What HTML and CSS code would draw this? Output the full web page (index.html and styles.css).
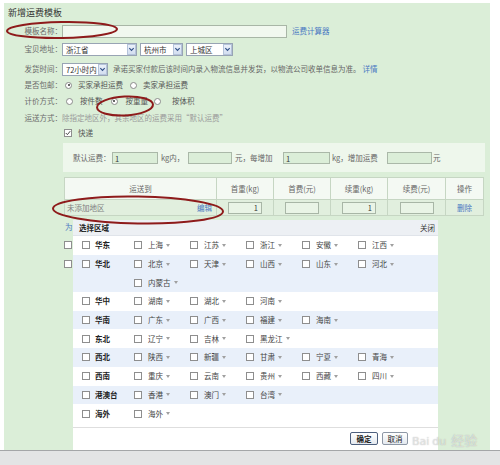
FILE: index.html
```html
<!DOCTYPE html>
<html lang="zh-CN">
<head>
<meta charset="utf-8">
<title>新增运费模板</title>
<link rel="stylesheet" href="styles.css">
</head>
<body>
<div class="screen">
  <div class="page">
    <div class="title">新增运费模板</div>

    <div class="row r1">
      <span class="lbl">模板名称：</span>
      <span class="inp w-name"></span>
      <a class="link ml5">运费计算器</a>
    </div>

    <div class="row r2">
      <span class="lbl">宝贝地址：</span>
      <span class="sel w75"><span class="sel-text">浙江省</span><span class="sel-arrow"><svg viewBox="0 0 8 8" width="7" height="7"><path d="M1.5 2.5 L4 5 L6.5 2.5" fill="none" stroke="#2f4f86" stroke-width="1.3"/></svg></span></span>
      <span class="sel w43 ml3"><span class="sel-text">杭州市</span><span class="sel-arrow"><svg viewBox="0 0 8 8" width="7" height="7"><path d="M1.5 2.5 L4 5 L6.5 2.5" fill="none" stroke="#2f4f86" stroke-width="1.3"/></svg></span></span>
      <span class="sel w47 ml3"><span class="sel-text">上城区</span><span class="sel-arrow"><svg viewBox="0 0 8 8" width="7" height="7"><path d="M1.5 2.5 L4 5 L6.5 2.5" fill="none" stroke="#2f4f86" stroke-width="1.3"/></svg></span></span>
    </div>

    <div class="row r3">
      <span class="lbl">发货时间：</span>
      <span class="sel w46"><span class="sel-text">72小时内</span><span class="sel-arrow"><svg viewBox="0 0 8 8" width="7" height="7"><path d="M1.5 2.5 L4 5 L6.5 2.5" fill="none" stroke="#2f4f86" stroke-width="1.3"/></svg></span></span>
      <span class="txt ml5">承诺买家付款后该时间内录入物流信息并发货，以物流公司收单信息为准。</span>
      <a class="link ml2">详情</a>
    </div>

    <div class="row r4">
      <span class="lbl">是否包邮：</span>
      <i class="radio on ml3"></i><span class="opt ml6">买家承担运费</span>
      <i class="radio ml7"></i><span class="opt ml6">卖家承担运费</span>
    </div>

    <div class="row r5">
      <span class="lbl">计价方式：</span>
      <i class="radio ml4"></i><span class="opt ml7">按件数</span>
      <i class="radio on ml8"></i><span class="opt ml8">按重量</span>
      <i class="radio ml6"></i><span class="opt ml11">按体积</span>
    </div>

    <div class="row r6">
      <span class="lbl">运送方式：</span>
      <span class="hint">除指定地区外，其余地区的运费采用“默认运费”</span>
    </div>

    <div class="row r7">
      <span class="lbl"></span>
      <i class="cb checked ml2"><svg viewBox="0 0 8 8" width="6" height="6"><path d="M1 4 L3.2 6.2 L7 1.5" fill="none" stroke="#333" stroke-width="1.2"/></svg></i>
      <span class="opt ml6">快递</span>
    </div>

    <div class="defbox">
      <span class="t-lbl">默认运费：</span>
      <span class="inp dinp w46 ml2">1</span>
      <span class="t-s w24 ml3">kg内，</span>
      <span class="inp dinp w44 ml3"></span>
      <span class="t-s w45 ml3">元，每增加</span>
      <span class="inp dinp w47 ml3">1</span>
      <span class="t-s w53 ml2">kg，增加运费</span>
      <span class="inp dinp w45 ml2"></span>
      <span class="t-s ml1">元</span>
    </div>

    <table class="fare">
      <colgroup>
        <col class="c-to"><col class="c-n"><col class="c-n"><col class="c-n"><col class="c-n2"><col class="c-op">
      </colgroup>
      <thead>
        <tr><th>运送到</th><th>首重(kg)</th><th>首费(元)</th><th>续重(kg)</th><th>续费(元)</th><th>操作</th></tr>
      </thead>
      <tbody>
        <tr>
          <td><div class="to-cell"><span class="none">未添加地区</span><a class="link">编辑</a></div></td>
          <td><span class="tinp">1</span></td>
          <td><span class="tinp"></span></td>
          <td><span class="tinp">1</span></td>
          <td><span class="tinp"></span></td>
          <td><a class="link">删除</a></td>
        </tr>
      </tbody>
    </table>

    <div class="row r8"><a class="link">为</a></div>
    <div class="row r9"><i class="cb"></i></div>
    <div class="row r9"><i class="cb"></i></div>

    <div class="popup">
      <div class="pop-head"><b>选择区域</b><span class="close">关闭</span></div>
      <div class="pop-body">
        <div class="area">
          <span class="reg"><i class="cb"></i><b>华东</b></span>
          <div class="provs">
            <span class="prov"><i class="cb"></i>上海<i class="dd"></i></span>
            <span class="prov"><i class="cb"></i>江苏<i class="dd"></i></span>
            <span class="prov"><i class="cb"></i>浙江<i class="dd"></i></span>
            <span class="prov"><i class="cb"></i>安徽<i class="dd"></i></span>
            <span class="prov"><i class="cb"></i>江西<i class="dd"></i></span>
          </div>
        </div>
        <div class="area alt">
          <span class="reg"><i class="cb"></i><b>华北</b></span>
          <div class="provs">
            <span class="prov"><i class="cb"></i>北京<i class="dd"></i></span>
            <span class="prov"><i class="cb"></i>天津<i class="dd"></i></span>
            <span class="prov"><i class="cb"></i>山西<i class="dd"></i></span>
            <span class="prov"><i class="cb"></i>山东<i class="dd"></i></span>
            <span class="prov"><i class="cb"></i>河北<i class="dd"></i></span>
            <span class="prov"><i class="cb"></i>内蒙古<i class="dd"></i></span>
          </div>
        </div>
        <div class="area">
          <span class="reg"><i class="cb"></i><b>华中</b></span>
          <div class="provs">
            <span class="prov"><i class="cb"></i>湖南<i class="dd"></i></span>
            <span class="prov"><i class="cb"></i>湖北<i class="dd"></i></span>
            <span class="prov"><i class="cb"></i>河南<i class="dd"></i></span>
          </div>
        </div>
        <div class="area alt">
          <span class="reg"><i class="cb"></i><b>华南</b></span>
          <div class="provs">
            <span class="prov"><i class="cb"></i>广东<i class="dd"></i></span>
            <span class="prov"><i class="cb"></i>广西<i class="dd"></i></span>
            <span class="prov"><i class="cb"></i>福建<i class="dd"></i></span>
            <span class="prov"><i class="cb"></i>海南<i class="dd"></i></span>
          </div>
        </div>
        <div class="area">
          <span class="reg"><i class="cb"></i><b>东北</b></span>
          <div class="provs">
            <span class="prov"><i class="cb"></i>辽宁<i class="dd"></i></span>
            <span class="prov"><i class="cb"></i>吉林<i class="dd"></i></span>
            <span class="prov"><i class="cb"></i>黑龙江<i class="dd"></i></span>
          </div>
        </div>
        <div class="area alt">
          <span class="reg"><i class="cb"></i><b>西北</b></span>
          <div class="provs">
            <span class="prov"><i class="cb"></i>陕西<i class="dd"></i></span>
            <span class="prov"><i class="cb"></i>新疆<i class="dd"></i></span>
            <span class="prov"><i class="cb"></i>甘肃<i class="dd"></i></span>
            <span class="prov"><i class="cb"></i>宁夏<i class="dd"></i></span>
            <span class="prov"><i class="cb"></i>青海<i class="dd"></i></span>
          </div>
        </div>
        <div class="area">
          <span class="reg"><i class="cb"></i><b>西南</b></span>
          <div class="provs">
            <span class="prov"><i class="cb"></i>重庆<i class="dd"></i></span>
            <span class="prov"><i class="cb"></i>云南<i class="dd"></i></span>
            <span class="prov"><i class="cb"></i>贵州<i class="dd"></i></span>
            <span class="prov"><i class="cb"></i>西藏<i class="dd"></i></span>
            <span class="prov"><i class="cb"></i>四川<i class="dd"></i></span>
          </div>
        </div>
        <div class="area alt">
          <span class="reg"><i class="cb"></i><b>港澳台</b></span>
          <div class="provs">
            <span class="prov"><i class="cb"></i>香港<i class="dd"></i></span>
            <span class="prov"><i class="cb"></i>澳门<i class="dd"></i></span>
            <span class="prov"><i class="cb"></i>台湾<i class="dd"></i></span>
          </div>
        </div>
        <div class="area">
          <span class="reg"><i class="cb"></i><b>海外</b></span>
          <div class="provs">
            <span class="prov"><i class="cb"></i>海外<i class="dd"></i></span>
          </div>
        </div>
      </div>
      <div class="pop-foot">
        <span class="btn ok">确定</span>
        <span class="btn cancel">取消</span>
      </div>
    </div>
  </div>
  <div class="statusbar"></div>

  <div class="watermark"><span class="wm-en">Bai</span><span class="wm-en">du</span><span class="wm-cn">经验</span></div>

  <svg class="marks" viewBox="0 0 500 465" width="500" height="465">
    <ellipse cx="62" cy="30" rx="55" ry="8" transform="rotate(-1 62 30)"/>
    <ellipse cx="125" cy="106" rx="28" ry="9.5" transform="rotate(-3 125 106)"/>
    <ellipse cx="138" cy="210" rx="85" ry="13.5" transform="rotate(1 138 210)"/>
  </svg>
</div>
</body>
</html>
```

FILE: styles.css
```css
* { box-sizing: border-box; }
html, body { margin: 0; padding: 0; background: #fff; }
.screen {
  position: relative;
  width: 500px;
  height: 465px;
  overflow: hidden;
  background: #fff;
  font-family: "Noto Sans CJK SC", "Liberation Sans", sans-serif;
  font-size: 7.5px;
  color: #555;
}
.page {
  position: relative;
  margin: 3px 10px 0 4px;
  height: 447px;
  background: #dbeed8;
}
.statusbar {
  height: 15px;
  background: #e3e4e5;
  border-top: 1px solid #a4a6a8;
}
.title {
  height: 15px;
  padding: 5px 0 0 4px;
  font-size: 9px;
  line-height: 10px;
  color: #333;
}
.row { display: flex; align-items: center; height: 16px; line-height: 10px; white-space: nowrap; }
.r1 { margin-top: 5px; }
.r2 { margin-top: 2px; }
.r3 { margin-top: 4px; }
.r6 { margin-top: 1px; height: 15px; }
.r8 { margin-top: 3px; padding-left: 61px; }
.r9 { height: 19px; padding-left: 60px; }
.lbl { width: 58px; flex: none; text-align: right; color: #6b6b6b; }
.link { color: #4a78c2; text-decoration: none; }
.txt { color: #666; }
.hint { color: #9a9a9a; }
.opt { color: #555; }

.ml1 { margin-left: 1px; } .ml2 { margin-left: 2px; } .ml3 { margin-left: 3px; }
.ml4 { margin-left: 4px; } .ml5 { margin-left: 5px; } .ml6 { margin-left: 6px; }
.ml7 { margin-left: 7px; } .ml8 { margin-left: 8px; } .ml11 { margin-left: 11px; }

.inp {
  display: inline-block;
  height: 13px;
  border: 1px solid #a8b6a6;
  background: #f1f8ef;
  color: #333;
  line-height: 11px;
  padding-left: 2px;
}
.w-name { width: 225px; }
.w24 { width: 24px; } .w43 { width: 43px; } .w44 { width: 44px; } .w45 { width: 45px; }
.w46 { width: 46px; } .w47 { width: 47px; } .w53 { width: 53px; } .w75 { width: 75px; }

.sel {
  display: inline-flex;
  align-items: center;
  height: 13px;
  border: 1px solid #98a4b4;
  background: #fff;
  color: #333;
}
.sel-text { flex: 1; padding-left: 3px; line-height: 11px; }
.sel-arrow {
  width: 9px;
  height: 11px;
  background: linear-gradient(#eaf0fa, #d3def0);
  border: 1px solid #b4c3da;
  display: flex;
  align-items: center;
  justify-content: center;
}

.radio {
  display: inline-block;
  flex: none;
  width: 7px;
  height: 7px;
  border: 1px solid #8a8a8a;
  border-radius: 50%;
  background: #fff;
  position: relative;
}
.radio.on::after {
  content: "";
  position: absolute;
  left: 1.5px;
  top: 1.5px;
  width: 2px;
  height: 2px;
  border-radius: 50%;
  background: #333;
}
.cb {
  display: inline-flex;
  align-items: center;
  justify-content: center;
  flex: none;
  width: 8px;
  height: 8px;
  border: 1px solid #8e8e8e;
  background: #fff;
}

.defbox {
  display: flex;
  align-items: center;
  margin: 2px 0 0 59px;
  width: 422px;
  height: 29px;
  padding-left: 10px;
  background: #eef7ec;
  white-space: nowrap;
  line-height: 10px;
}
.t-lbl { width: 37px; color: #666; }
.t-s { display: inline-block; color: #666; }
.dinp { height: 12px; background: #dbeed8; border-color: #aab8a8; }

.fare {
  margin: 5px 0 0 60px;
  width: 419px;
  table-layout: fixed;
  border-collapse: collapse;
  line-height: 10px;
}
.c-to { width: 152px; } .c-n { width: 57px; } .c-n2 { width: 58px; } .c-op { width: 38px; }
.fare th, .fare td { border: 1px solid #c6d6c3; padding: 0; text-align: center; }
.fare th { height: 22px; background: #f4f9f3; font-weight: normal; color: #666; }
.fare td { height: 16px; background: #e1efde; }
.to-cell { display: flex; justify-content: space-between; padding: 0 4px 0 2px; }
.none { color: #808080; }
.tinp {
  display: inline-block;
  vertical-align: middle;
  width: 34px;
  height: 12px;
  border: 1px solid #a8b6a6;
  background: #e9f4e6;
  text-align: right;
  padding-right: 3px;
  line-height: 10px;
  color: #333;
}

.popup {
  position: absolute;
  left: 69px;
  top: 217px;
  width: 365px;
  height: 230px;
  background: #fff;
  z-index: 2;
  line-height: 10px;
  white-space: nowrap;
}
.pop-head {
  display: flex;
  justify-content: space-between;
  align-items: center;
  height: 16px;
  padding: 0 3px 0 6px;
  background: #edf0f4;
  border-bottom: 1px solid #e0e4ea;
}
.pop-head b { color: #222; }
.close { color: #333; }
.pop-body { height: 191px; }
.area { display: flex; align-items: flex-start; padding-left: 9px; }
.area.alt { background: #e9f0fa; }
.reg { display: flex; align-items: center; width: 52px; height: 18.7px; flex: none; }
.reg .cb { margin-right: 5px; }
.reg b { color: #222; }
.provs { display: flex; flex-wrap: wrap; width: 280px; }
.prov { display: flex; align-items: center; width: 56px; height: 18.7px; color: #444; }
.prov .cb { margin-right: 6px; }
.dd {
  display: inline-block;
  margin-left: 3px;
  width: 0;
  height: 0;
  border-left: 2px solid transparent;
  border-right: 2px solid transparent;
  border-top: 3px solid #a0a0a0;
}
.pop-foot {
  display: flex;
  justify-content: flex-end;
  border-top: 1px solid #dedede;
  padding: 4px 30px 0 0;
}
.btn {
  display: inline-block;
  width: 28px;
  height: 13px;
  border: 1px solid #8d97a5;
  border-radius: 2px;
  background: linear-gradient(#ffffff, #e4e9ef);
  text-align: center;
  line-height: 11px;
  color: #222;
}
.btn.ok { border-color: #4d5f7d; font-weight: bold; }
.btn.cancel { margin-left: 4px; width: 26px; }

.watermark {
  position: absolute;
  left: 412px;
  top: 430px;
  z-index: 4;
  display: flex;
  align-items: baseline;
  gap: 3px;
  font-family: "DejaVu Sans", sans-serif;
  color: rgba(255, 255, 255, 0.55);
  text-shadow: 0 0 1px rgba(120, 120, 120, 0.6);
}
.wm-en { font-size: 11px; }
.wm-cn { font-family: "Noto Sans CJK SC", sans-serif; font-size: 13px; margin-left: 2px; }

.marks {
  position: absolute;
  left: 0;
  top: 0;
  z-index: 5;
  pointer-events: none;
}
.marks ellipse { fill: none; stroke: #8e1b1b; stroke-width: 2; }
```
